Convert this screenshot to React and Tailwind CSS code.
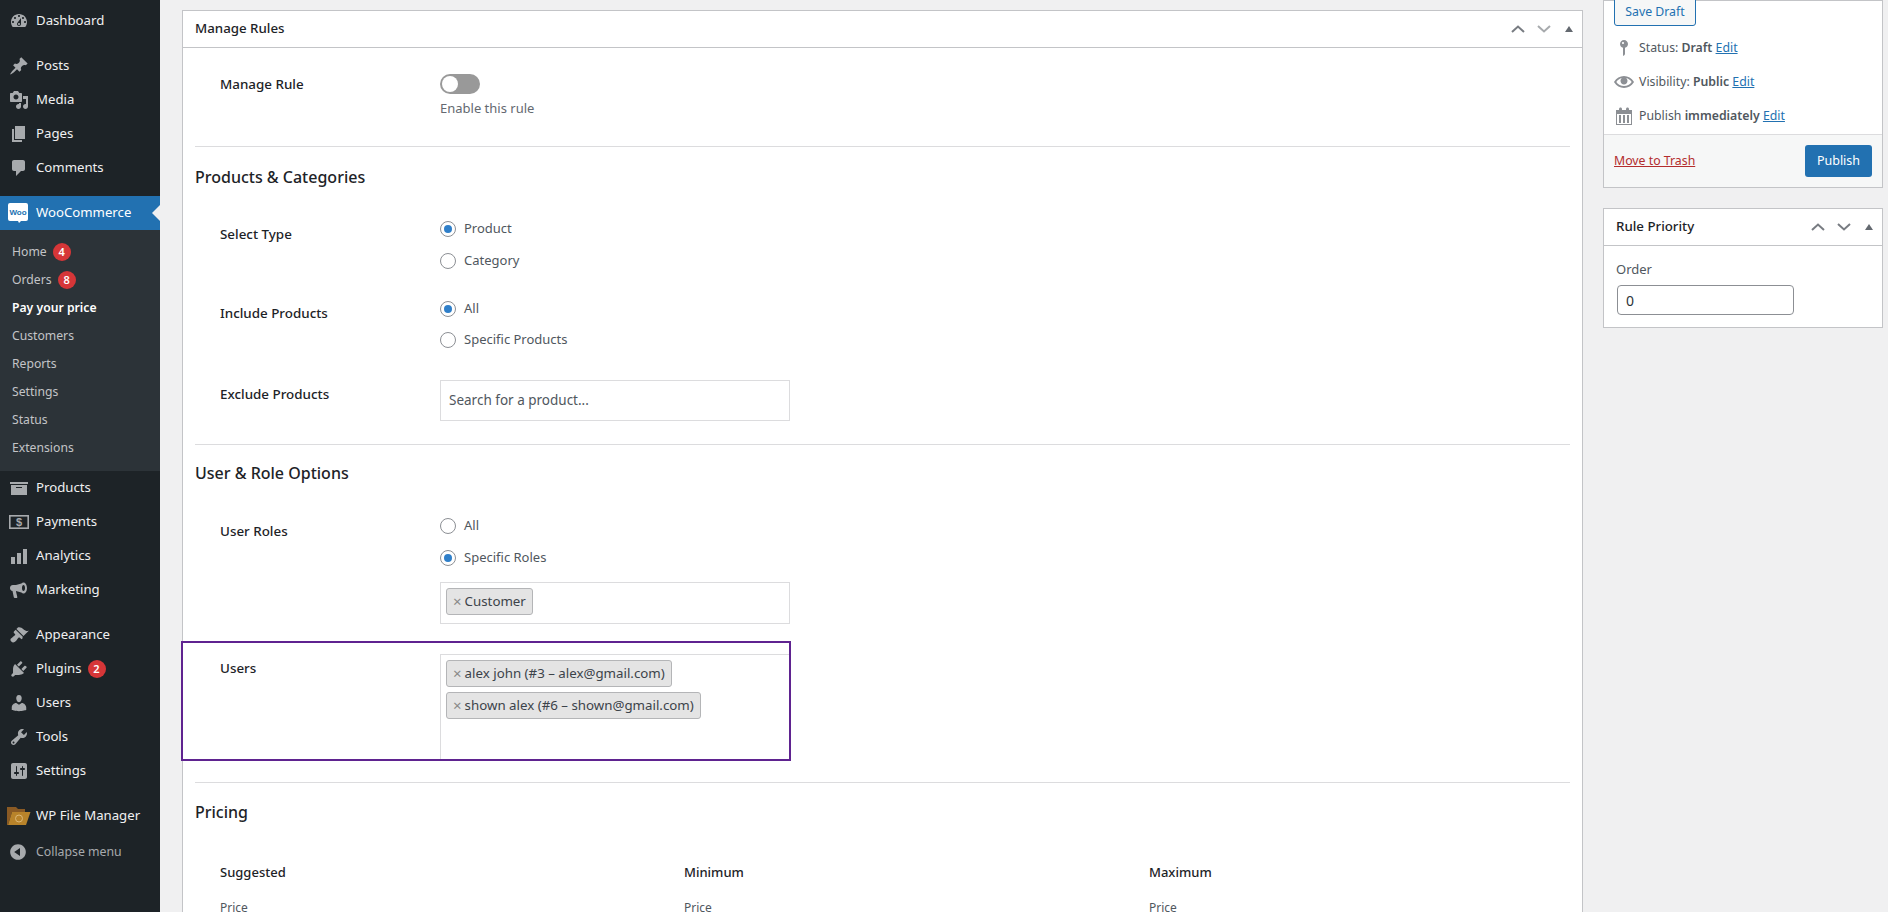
const ICONS = {
  dashboard:
    'M3.76 16h12.48c1.1-1.37 1.76-3.11 1.76-5 0-4.42-3.58-8-8-8s-8 3.58-8 8c0 1.89.66 3.63 1.76 5zM10 4c.55 0 1 .45 1 1s-.45 1-1 1-1-.45-1-1 .45-1 1-1zM6 6c.55 0 1 .45 1 1s-.45 1-1 1-1-.45-1-1 .45-1 1-1zm8 0c.55 0 1 .45 1 1s-.45 1-1 1-1-.45-1-1 .45-1 1-1zm-5.37 5.55L12 7v6c0 1.1-.9 2-2 2s-2-.9-2-2c0-.57.24-1.08.63-1.45zM4 10c.55 0 1 .45 1 1s-.45 1-1 1-1-.45-1-1 .45-1 1-1zm12 0c.55 0 1 .45 1 1s-.45 1-1 1-1-.45-1-1 .45-1 1-1zm-5 3c0-.55-.45-1-1-1s-1 .45-1 1 .45 1 1 1 1-.45 1-1z',
  post: 'M10.44 3.02l1.82-1.82 6.36 6.35-1.83 1.82c-1.05-.68-2.48-.57-3.41.36l-.75.75c-.92.93-1.04 2.35-.35 3.41l-1.83 1.82-2.41-2.41-2.8 2.79c-.42.42-3.38 2.71-3.8 2.29s1.86-3.39 2.28-3.81l2.79-2.79L4.1 9.36l1.83-1.82c1.05.69 2.48.57 3.4-.36l.75-.75c.93-.92 1.05-2.35.36-3.41z',
  media:
    'M13 11V4c0-.55-.45-1-1-1h-1.67L9 1H5L3.67 3H2c-.55 0-1 .45-1 1v7c0 .55.45 1 1 1h10c.55 0 1-.45 1-1zM7 4.5c1.38 0 2.5 1.12 2.5 2.5S8.38 9.5 7 9.5 4.5 8.38 4.5 7 5.62 4.5 7 4.5zM14 6h5v10.5c0 1.38-1.12 2.5-2.5 2.5S14 17.88 14 16.5s1.12-2.5 2.5-2.5c.17 0 .34.02.5.05V9h-3V6zm-4 8.05V13h2v3.5c0 1.38-1.12 2.5-2.5 2.5S7 17.88 7 16.5 8.12 14 9.5 14c.17 0 .34.02.5.05z',
  page: 'M6 15V2h10v13H6zm-1 1h8v2H3V5h2v11z',
  comments: 'M5 2h9c1.1 0 2 .9 2 2v7c0 1.1-.9 2-2 2h-2l-5 5v-5H5c-1.1 0-2-.9-2-2V4c0-1.1.9-2 2-2z',
  archive: 'M19 4v2H1V4h18zM2 7h16v10H2V7zm11 3V9H7v1h6z',
  analytics: 'M2 11h4v7H2zM8 7h4v11H8zM14 3h4v15h-4z',
  marketing:
    'M14.5 2.5c2 0 3.5 2.5 3.5 5.5s-1.500 5.500-3.500 5.500c-.8 0-1.500-.4-2.100-1L7 11v.5l1.300 5.500c.1.500-.2 1-.8 1H5.800c-.5 0-.9-.3-1-.8L3.500 11C2.100 10.800 1 9.600 1 8.200V7.800C1 6.200 2.300 5 3.900 5H7l5.400-1.500c.6-.6 1.300-1 2.100-1zm0 2.500c-.8 0-1.500 1.300-1.500 3s.7 3 1.500 3 1.500-1.300 1.500-3-.7-3-1.500-3z',
  appearance:
    'M14.48 11.06L7.41 3.99l1.5-1.5c.5-.56 2.3-.47 3.51.32 1.21.8 1.43 1.28 2.91 2.1 1.18.64 2.45 1.26 4.45.85zm-.71.71L6.7 4.7 4.93 6.47c-.39.39-.39 1.02 0 1.41l1.06 1.06c.39.39.39 1.03 0 1.42-.6.6-1.43 1.11-2.21 1.69-.35.26-.7.53-1.01.84C1.43 13.23.78 15 2.3 16.5c1.5 1.52 3.27.87 4.61-.47.31-.31.58-.66.84-1.01.58-.78 1.09-1.61 1.69-2.21.39-.39 1.03-.39 1.42 0l1.06 1.06c.39.39 1.02.39 1.41 0z',
  plugins:
    'M13.11 4.36L9.87 7.6 8 5.73l3.24-3.24c.35-.34 1.05-.2 1.56.32.52.51.66 1.21.31 1.55zm-8 1.77l.91-1.12 9.01 9.01-1.19.84c-.71.71-2.63 1.16-3.82 1.16H6.14L4.9 17.26c-.59.59-1.54.59-2.12 0-.59-.58-.59-1.53 0-2.12l1.24-1.24v-3.88c0-1.13.4-3.19 1.09-3.89zm7.26 3.97l3.24-3.24c.34-.35 1.04-.21 1.55.31.52.51.66 1.21.31 1.55l-3.24 3.25z',
  users:
    'M10 9.25c-2.27 0-2.73-3.44-2.73-3.44C7 4.02 7.82 2 9.97 2c2.16 0 2.98 2.02 2.71 3.81 0 0-.41 3.44-2.68 3.44zm0 2.57L12.72 10c2.39 0 4.52 2.33 4.52 4.53v2.49s-3.65 1.13-7.24 1.13c-3.65 0-7.24-1.13-7.24-1.13v-2.49c0-2.25 1.94-4.48 4.47-4.48z',
  tools:
    'M16.68 9.77c-1.34 1.34-3.3 1.67-4.95.99l-5.41 6.52c-.99.99-2.59.99-3.58 0s-.99-2.59 0-3.57l6.52-5.42c-.68-1.65-.35-3.61.99-4.95 1.28-1.28 3.12-1.62 4.72-1.06l-2.89 2.89 2.82 2.82 2.86-2.87c.53 1.58.18 3.39-1.08 4.65zM3.81 16.21c.4.39 1.04.39 1.43 0 .4-.4.4-1.04 0-1.43-.39-.4-1.03-.4-1.43 0-.39.39-.39 1.03 0 1.43z',
  settings:
    'M18 16V4c0-1.1-.9-2-2-2H4c-1.1 0-2 .9-2 2v12c0 1.1.9 2 2 2h12c1.1 0 2-.9 2-2zM8 11h1c.55 0 1 .45 1 1s-.45 1-1 1H8v1.500c0 .28-.22.5-.5.5s-.5-.22-.5-.5V13H6c-.55 0-1-.45-1-1s.45-1 1-1h1V5.500c0-.28.22-.5.5-.5s.5.22.5.5V11zm5-2h-1c-.55 0-1-.45-1-1s.45-1 1-1h1V5.500c0-.28.22-.5.5-.5s.5.22.5.5V7h1c.55 0 1 .45 1 1s-.45 1-1 1h-1v5.500c0 .28-.22.5-.5.5s-.5-.22-.5-.5V9z',
  collapse: 'M10 2.160c4.330 0 7.840 3.510 7.840 7.840s-3.510 7.840-7.840 7.840S2.160 14.330 2.160 10 5.710 2.160 10 2.160zm2 11.720V6.120L6.180 9.970z',
  pin: 'M14 6c0 1.860-1.280 3.410-3 3.860V16c0 1-2 2-2 2V9.860c-1.720-.45-3-2-3-3.860 0-2.210 1.790-4 4-4s4 1.790 4 4zM8 5c0 .55.45 1 1 1s1-.45 1-1-.45-1-1-1-1 .45-1 1z',
  eye: 'M19.700 9.400C17.700 6 14 3.900 10 3.900S2.300 6 .3 9.400L0 10l.3.6c2 3.400 5.700 5.500 9.700 5.500s7.700-2.100 9.700-5.500l.3-.6-.3-.6zM10 14.100c-3.100 0-6-1.600-7.700-4.100C3.600 8 5.700 6.600 8 6.100c-.9.6-1.500 1.700-1.500 2.900 0 1.900 1.600 3.500 3.500 3.500s3.500-1.600 3.500-3.500c0-1.200-.6-2.300-1.500-2.900 2.300.5 4.400 1.900 5.700 3.900-1.700 2.500-4.600 4.100-7.700 4.100z',
  calendar:
    'M15 4h3v15H2V4h3V3c0-.41.15-.76.44-1.060.29-.29.65-.44 1.060-.44s.77.15 1.060.44c.29.3.44.65.44 1.060v1h4V3c0-.41.15-.76.44-1.060.29-.29.65-.44 1.060-.44s.77.15 1.060.44c.29.3.44.65.44 1.060v1zM17 18V8H3v10h14zM5 9h2v8H5V9zm4 0h2v8H9V9zm4 0h2v8h-2V9z',
}

function Dash({ name, className = 'h-5 w-5' }) {
  return (
    <svg viewBox="0 0 20 20" className={className} fill="currentColor" fillRule="evenodd">
      <path d={ICONS[name]} />
    </svg>
  )
}

function PaymentsIcon() {
  return (
    <svg viewBox="0 0 20 20" className="h-5 w-5" fill="none">
      <rect x="0.800" y="3.800" width="18.400" height="12.400" stroke="currentColor" strokeWidth="1.600" />
      <text x="10" y="14.200" textAnchor="middle" fontSize="11" fontWeight="700" fill="currentColor" fontFamily="Liberation Sans">
        $
      </text>
    </svg>
  )
}

function WooIcon() {
  return (
    <svg viewBox="0 0 20 20" className="h-5 w-5">
      <path d="M2 0h16a2 2 0 0 1 2 2v14a2 2 0 0 1-2 2h-5l-2 2-1-2H2a2 2 0 0 1-2-2V2a2 2 0 0 1 2-2z" fill="#fff" />
      <text x="10" y="12" textAnchor="middle" fontSize="8" fontWeight="700" fill="#2271b1" fontFamily="Liberation Sans">
        Woo
      </text>
    </svg>
  )
}

function FolderIcon() {
  return (
    <svg viewBox="0 0 24 20" className="h-[20px] w-[24px]">
      <path d="M0 1h9l2 2h7v3H5L1 19H0z" fill="#8a5a24" />
      <path d="M5 6h18.500L19 19H1z" fill="#b8832a" />
      <circle cx="12" cy="12.500" r="3.500" fill="none" stroke="#dcb877" strokeWidth="1" />
    </svg>
  )
}

const MENU = [
  [{ label: 'Dashboard', icon: 'dashboard' }],
  [
    { label: 'Posts', icon: 'post' },
    { label: 'Media', icon: 'media' },
    { label: 'Pages', icon: 'page' },
    { label: 'Comments', icon: 'comments' },
  ],
]

const MENU_AFTER_WOO = [
  [
    { label: 'Products', icon: 'archive' },
    { label: 'Payments', custom: <PaymentsIcon /> },
    { label: 'Analytics', icon: 'analytics' },
    { label: 'Marketing', icon: 'marketing' },
  ],
  [
    { label: 'Appearance', icon: 'appearance' },
    { label: 'Plugins', icon: 'plugins', badge: 2 },
    { label: 'Users', icon: 'users' },
    { label: 'Tools', icon: 'tools' },
    { label: 'Settings', icon: 'settings' },
  ],
]

const SUBMENU = [
  { label: 'Home', badge: 4 },
  { label: 'Orders', badge: 8 },
  { label: 'Pay your price', active: true },
  { label: 'Customers' },
  { label: 'Reports' },
  { label: 'Settings' },
  { label: 'Status' },
  { label: 'Extensions' },
]

function Badge({ n }) {
  return (
    <span className="ml-[6px] flex h-[18px] w-[18px] items-center justify-center rounded-full bg-[#d63638] text-[11px] font-semibold text-white">
      {n}
    </span>
  )
}

function MenuItem({ item }) {
  return (
    <div className="flex h-[34px] items-center text-[13.2px] text-[#f0f0f1]">
      <span className="flex w-[36px] justify-center pl-[1px] text-[#a7aaad]">
        {item.custom || <Dash name={item.icon} />}
      </span>
      <span>{item.label}</span>
      {item.badge && <Badge n={item.badge} />}
    </div>
  )
}

function Sidebar() {
  return (
    <aside className="h-[912px] w-[160px] shrink-0 bg-[#1d2327] pt-[4px]">
      {MENU.map((group, i) => (
        <div key={i} className="mb-[11px]">
          {group.map((item) => (
            <MenuItem key={item.label} item={item} />
          ))}
        </div>
      ))}
      <div className="relative flex h-[34px] items-center bg-[#2271b1] text-[13.2px] text-white">
        <span className="flex w-[36px] justify-center">
          <WooIcon />
        </span>
        <span>WooCommerce</span>
        <span className="absolute right-0 top-[9px] h-0 w-0 border-y-[8px] border-r-[8px] border-y-transparent border-r-[#f0f0f1]" />
      </div>
      <div className="bg-[#2c3338] pb-[9px] pt-[8px]">
        {SUBMENU.map((s) => (
          <div
            key={s.label}
            className={
              s.active
                ? 'flex h-[28px] items-center pl-[12px] text-[12.2px] font-semibold text-white'
                : 'flex h-[28px] items-center pl-[12px] text-[12.2px] text-[#c3c4c7]'
            }
          >
            {s.label}
            {s.badge && <Badge n={s.badge} />}
          </div>
        ))}
      </div>
      {MENU_AFTER_WOO.map((group, i) => (
        <div key={i} className="mb-[11px]">
          {group.map((item) => (
            <MenuItem key={item.label} item={item} />
          ))}
        </div>
      ))}
      <div className="flex h-[34px] items-center text-[13.2px] text-[#f0f0f1]">
        <span className="flex w-[36px] justify-start pl-[7px]">
          <FolderIcon />
        </span>
        <span>WP File Manager</span>
      </div>
      <div className="mt-[2px] flex h-[34px] items-center text-[12.3px] text-[#a7aaad]">
        <span className="flex w-[36px] justify-center text-[#a7aaad]">
          <Dash name="collapse" />
        </span>
        <span>Collapse menu</span>
      </div>
    </aside>
  )
}

function Handles({ downLight }) {
  return (
    <div className="flex items-center text-[#787c82]">
      <svg viewBox="0 0 14 8" className="h-[8px] w-[14px]" fill="none" stroke="currentColor" strokeWidth="2">
        <path d="M1 7l6-5.500L13 7" />
      </svg>
      <svg
        viewBox="0 0 14 8"
        className={downLight ? 'ml-[12px] h-[8px] w-[14px] text-[#a7aaad]' : 'ml-[12px] h-[8px] w-[14px]'}
        fill="none"
        stroke="currentColor"
        strokeWidth="2"
      >
        <path d="M1 1l6 5.500L13 1" />
      </svg>
      <span className="ml-[14px] mr-[9px] h-0 w-0 border-x-[4px] border-b-[6px] border-x-transparent border-b-[#646970]" />
    </div>
  )
}

function Radio({ label, checked }) {
  return (
    <label className="flex h-[20px] items-center text-[13px] text-[#50575e]">
      <span className="mr-[8px] flex h-[16px] w-[16px] items-center justify-center rounded-full border border-[#8c8f94] bg-white">
        {checked && <span className="h-[8px] w-[8px] rounded-full bg-[#2f7fc9]" />}
      </span>
      <span className="-mt-[1px]">{label}</span>
    </label>
  )
}

function Tag({ children }) {
  return (
    <span className="flex h-[27px] w-fit items-center rounded-[3px] border border-[#b4b5b7] bg-[#e4e4e4] pl-[6px] pr-[6px] text-[13.3px] text-[#3c434a]">
      <span className="mr-[3px] text-[15px] text-[#888]">×</span>
      {children}
    </span>
  )
}

function Label({ children, className }) {
  return <div className={`w-[220px] shrink-0 text-[13.4px] font-medium leading-[20px] text-[#1d2327] ${className}`}>{children}</div>
}

function SectionTitle({ children, className }) {
  return <h2 className={`text-[16px] font-medium leading-[24px] text-[#1d2327] ${className}`}>{children}</h2>
}

function Divider({ className }) {
  return <div className={`h-px bg-[#dcdcde] ${className}`} />
}

function ManageRules() {
  return (
    <section className="w-[1401px] shrink-0 self-start border border-[#c3c4c7] bg-white">
      <header className="flex h-[37px] items-center justify-between border-b border-[#c3c4c7] pl-[12px]">
        <h2 className="text-[13.3px] font-medium text-[#1d2327]">Manage Rules</h2>
        <Handles downLight />
      </header>
      <div className="px-[12px]">
        <div className="flex h-[98px] pl-[25px] pt-[26px]">
          <Label>Manage Rule</Label>
          <div>
            <div className="flex h-[20px] w-[40px] items-center rounded-full bg-[#999] pl-[2px]">
              <span className="h-[16px] w-[16px] rounded-full bg-white" />
            </div>
            <p className="mt-[4px] text-[13px] leading-[20px] text-[#646970]">Enable this rule</p>
          </div>
        </div>
        <Divider />
        <SectionTitle className="mt-[18px]">Products &amp; Categories</SectionTitle>

        <div className="mt-[30px] flex pl-[25px]">
          <Label className="pt-[5px]">Select Type</Label>
          <div className="flex flex-col gap-[12px]">
            <Radio label="Product" checked />
            <Radio label="Category" />
          </div>
        </div>
        <div className="mt-[28px] flex pl-[25px]">
          <Label className="pt-[4px]">Include Products</Label>
          <div className="flex flex-col gap-[11px]">
            <Radio label="All" checked />
            <Radio label="Specific Products" />
          </div>
        </div>
        <div className="mt-[30px] flex pl-[25px]">
          <Label className="pt-[4px]">Exclude Products</Label>
          <div className="flex h-[41px] w-[350px] items-center border border-[#dcdcde] pl-[8px] text-[13.5px] text-[#50575e]">
            Search for a product...
          </div>
        </div>
        <Divider className="mt-[23px]" />
        <SectionTitle className="mt-[16px]">User &amp; Role Options</SectionTitle>

        <div className="mt-[31px] flex pl-[25px]">
          <Label className="pt-[5px]">User Roles</Label>
          <div>
            <div className="flex flex-col gap-[12px]">
              <Radio label="All" />
              <Radio label="Specific Roles" checked />
            </div>
            <div className="mt-[14px] h-[42px] w-[350px] border border-[#dcdcde] pl-[5px] pt-[5px]">
              <Tag>Customer</Tag>
            </div>
          </div>
        </div>

        {/* purple highlight sits over the panel's left border */}
        <div className="relative -ml-[14px] mt-[17px] flex h-[120px] w-[610px] border-2 border-[#5f2390] pl-[37px]">
          <Label className="pt-[15px]">Users</Label>
          <div className="mt-[11px] flex flex-1 flex-col gap-[5px] border-l border-t border-[#dcdcde] pl-[5px] pt-[5px]">
            <Tag>alex john (#3 – alex@gmail.com)</Tag>
            <Tag>shown alex (#6 – shown@gmail.com)</Tag>
          </div>
        </div>

        <Divider className="mt-[21px]" />
        <SectionTitle className="mt-[17px]">Pricing</SectionTitle>
        <div className="mt-[38px] grid grid-cols-[464px_465px_1fr] pl-[25px] leading-[20px]">
          {['Suggested', 'Minimum', 'Maximum'].map((h) => (
            <div key={h}>
              <div className="text-[13px] font-medium text-[#1d2327]">{h}</div>
              <div className="mt-[16px] text-[12px] text-[#50575e]">Price</div>
            </div>
          ))}
        </div>
      </div>
    </section>
  )
}

function PublishBox() {
  const line = 'flex h-[34px] items-center text-[12.3px] text-[#50575e]'
  return (
    <div className="border border-[#c3c4c7] bg-white">
      <div className="flex h-[25px] items-end px-[10px]">
        <div className="flex h-[36px] w-[82px] shrink-0 items-center justify-center rounded-[3px] border border-[#2271b1] bg-[#f6f7f7] pt-[9px] text-[12.3px] text-[#2271b1]">
          Save Draft
        </div>
      </div>
      <div className="pl-[10px] pt-[5px]">
        <div className={line}>
          <span className="mr-[5px] flex w-[20px] justify-center text-[#8c8f94]">
            <Dash name="pin" />
          </span>
          Status:&nbsp;<b className="font-semibold">Draft</b>&nbsp;<a className="text-[#2271b1] underline">Edit</a>
        </div>
        <div className={line}>
          <span className="mr-[5px] flex w-[20px] justify-center text-[#8c8f94]">
            <Dash name="eye" />
          </span>
          Visibility:&nbsp;<b className="font-semibold">Public</b>&nbsp;<a className="text-[#2271b1] underline">Edit</a>
        </div>
        <div className={line}>
          <span className="mr-[5px] flex w-[20px] justify-center text-[#8c8f94]">
            <Dash name="calendar" />
          </span>
          Publish&nbsp;<b className="font-semibold">immediately</b>&nbsp;<a className="text-[#2271b1] underline">Edit</a>
        </div>
      </div>
      <div className="mt-[1px] flex h-[53px] items-center justify-between border-t border-[#dcdcde] bg-[#f6f7f7] pl-[10px] pr-[10px]">
        <a className="text-[12.3px] text-[#b32d2e] underline">Move to Trash</a>
        <div className="flex h-[32px] w-[67px] items-center justify-center rounded-[3px] bg-[#2271b1] text-[12.5px] text-white">
          Publish
        </div>
      </div>
    </div>
  )
}

function PriorityBox() {
  return (
    <div className="mt-[20px] border border-[#c3c4c7] bg-white">
      <header className="flex h-[37px] items-center justify-between border-b border-[#c3c4c7] pl-[12px]">
        <h2 className="text-[13.3px] font-medium text-[#1d2327]">Rule Priority</h2>
        <Handles />
      </header>
      <div className="px-[13px] pb-[12px] pt-[13px]">
        <div className="-ml-[1px] text-[13px] leading-[20px] text-[#50575e]">Order</div>
        <div className="mt-[6px] flex h-[30px] w-[177px] items-center rounded-[4px] border border-[#8c8f94] pl-[8px] text-[14px] text-[#2c3338]">
          0
        </div>
      </div>
    </div>
  )
}

export default function App() {
  return (
    <div className="flex h-[912px] overflow-hidden bg-[#f0f0f1] font-['Noto_Sans',sans-serif]">
      <Sidebar />
      <main className="flex flex-1 gap-[20px] overflow-hidden pl-[22px] pt-[10px]">
        <ManageRules />
        <div className="-mt-[10px] w-[280px] shrink-0">
          <PublishBox />
          <PriorityBox />
        </div>
      </main>
    </div>
  )
}
